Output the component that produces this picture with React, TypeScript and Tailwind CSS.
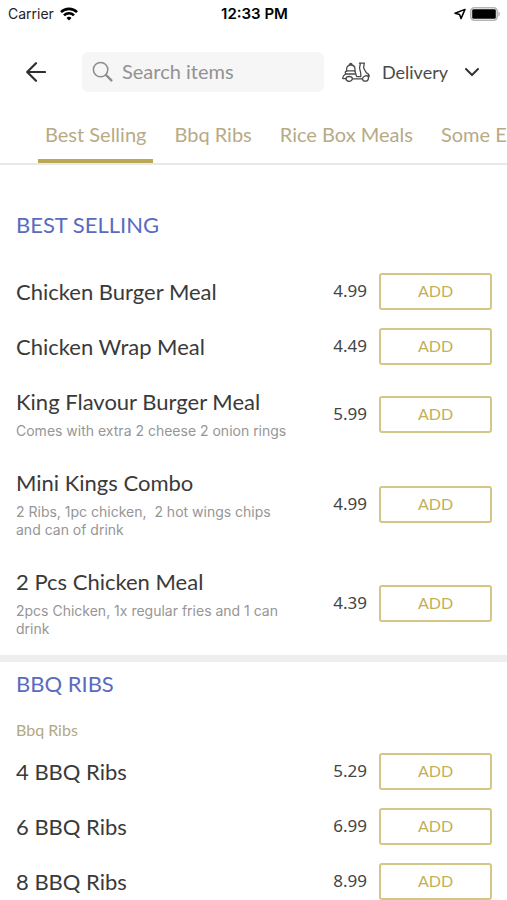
import { ChevronDown } from 'lucide-react'

interface MenuItem {
  name: string
  price: string
  description?: string
}

interface MenuSection {
  title: string
  subtitle?: string
  items: MenuItem[]
}

const tabs = ['Best Selling', 'Bbq Ribs', 'Rice Box Meals', 'Some E']

const sections: MenuSection[] = [
  {
    title: 'BEST SELLING',
    items: [
      { name: 'Chicken Burger Meal', price: '4.99' },
      { name: 'Chicken Wrap Meal', price: '4.49' },
      {
        name: 'King Flavour Burger Meal',
        price: '5.99',
        description: 'Comes with extra 2 cheese 2 onion rings',
      },
      {
        name: 'Mini Kings Combo',
        price: '4.99',
        description: '2 Ribs, 1pc chicken,  2 hot wings chips and can of drink',
      },
      {
        name: '2 Pcs Chicken Meal',
        price: '4.39',
        description: '2pcs Chicken, 1x regular fries and 1 can drink',
      },
    ],
  },
  {
    title: 'BBQ RIBS',
    subtitle: 'Bbq Ribs',
    items: [
      { name: '4 BBQ Ribs', price: '5.29' },
      { name: '6 BBQ Ribs', price: '6.99' },
      { name: '8 BBQ Ribs', price: '8.99' },
    ],
  },
]

const WifiIcon = () => (
  <svg viewBox="0 0 18 14" className="h-3.5 w-[18px]" fill="none" stroke="black" strokeWidth="2.6">
    <path d="M1 5.2C5.4.7 12.6.7 17 5.2" />
    <path d="M4 8.4C6.8 5.6 11.2 5.6 14 8.4" />
    <path d="M6.5 10.9C8 9.5 10 9.5 11.5 10.9L9 13.5Z" fill="black" stroke="none" />
  </svg>
)

const LocationIcon = () => (
  <svg viewBox="0 0 12 12" className="size-3" fill="none" stroke="black" strokeWidth="1.5" strokeLinejoin="round">
    <path d="M11 1.4L1 5.2L5.6 6.4L7 10.6Z" />
  </svg>
)

const BatteryIcon = () => (
  <svg viewBox="0 0 31 14" className="h-3.5 w-[31px]">
    <rect x="0.8" y="0.8" width="26.4" height="12.4" rx="3.4" fill="white" stroke="#b5b5b5" strokeWidth="1.6" />
    <rect x="2.2" y="2.2" width="23.6" height="9.6" rx="1.4" fill="black" />
    <path d="M28.4 4.5C30.5 5.3 30.5 8.7 28.4 9.5Z" fill="#b5b5b5" />
  </svg>
)

const BackIcon = () => (
  <svg viewBox="0 0 20 20" className="size-5" fill="none" stroke="#2f2f2f" strokeWidth="2.2" strokeLinecap="round" strokeLinejoin="round">
    <path d="M19 10H1.5M10 1.2L1.2 10L10 18.8" />
  </svg>
)

const SearchIcon = () => (
  <svg viewBox="0 0 22 22" className="size-[22px] shrink-0" fill="none" stroke="#8c8c8c" strokeLinecap="round">
    <circle cx="8.6" cy="8.6" r="7.2" strokeWidth="1.5" />
    <path d="M14 14L19.4 19.4" strokeWidth="2.4" />
  </svg>
)

const ScooterIcon = () => (
  <svg viewBox="0 0 28 20" className="h-5 w-7" fill="none" stroke="#4a4a4a" strokeWidth="1.3" strokeLinecap="round" strokeLinejoin="round">
    {/* delivery box */}
    <path d="M4.6 9.2V7.2C4.6 4.6 6.2 3 8.8 3S13 4.6 13 7.2V9.2M7.6 2.8C7.6 .9 10 .9 10 2.8M4.6 8.8H13" />
    {/* seat and rear body */}
    <path d="M4.6 9.2C2.8 9.4 2.8 11.8 4.4 12H13.2M4.2 12C2 12.8 .8 14.4 .8 16.6H4" />
    {/* floor */}
    <path d="M13 9.2L14.6 14.6H18.6M10.4 16.8H20.4" />
    {/* handlebar and front shield */}
    <path d="M17.4 1.2H22.4M18.4 1.4L17.6 5.4C17.4 7.4 18.8 9.4 18.8 12V14.6M22.2 1.4L21.6 6L24.4 10.8C26.4 11.4 27.2 12.8 27.2 14.6C24.6 13 21.4 13.6 20.4 16.8" />
    {/* wheels */}
    <path d="M4 16.6A3.2 2.8 0 0 0 10.400 16.6C10.200 13.800 4.200 13.800 4 16.600Z" />
    <path d="M20.4 16.8C21 20 26 20 26.4 16.6V14.4" />
  </svg>
)

const StatusBar = () => (
  <div className="grid h-7 grid-cols-3 items-center pr-1.5 pl-2 font-['Inter'] text-sm text-[#222]">
    <div className="flex items-center gap-1.5">
      <span>Carrier</span>
      <WifiIcon />
    </div>
    <span className="text-center text-[15px] font-semibold text-black">12:33 PM</span>
    <div className="flex items-center justify-end gap-1">
      <LocationIcon />
      <BatteryIcon />
    </div>
  </div>
)

const MenuRow = ({ item }: { item: MenuItem }) => (
  <li className="flex items-center">
    <div className="min-w-0 flex-1 pt-3.5 pr-10 pb-[13px]">
      <h3 className="text-[22px] leading-7 whitespace-nowrap text-[#3a3a3a]">{item.name}</h3>
      {item.description && (
        <p className="pt-1.5 pb-0.5 font-['Inter'] text-sm leading-[18px] whitespace-pre-wrap text-[#969696]">
          {item.description}
        </p>
      )}
    </div>
    <span className="mr-3 pb-0.5 font-['Noto_Sans'] text-[17px] text-[#444]">{item.price}</span>
    <button
      type="button"
      aria-label={`Add ${item.name}`}
      className="h-[37px] w-[113px] shrink-0 rounded-[3px] border-2 border-[#d3c686] pb-0.5 text-base text-[#c2af58]"
    >
      ADD
    </button>
  </li>
)

const App = () => {
  return (
    <div className="h-screen overflow-hidden bg-white font-['Lato',sans-serif]">
      <StatusBar />

      <header className="flex items-center pt-6 pr-[23px] pl-[26px]">
        <button type="button" aria-label="Back">
          <BackIcon />
        </button>
        <label className="ml-9 flex h-10 min-w-0 flex-1 items-center gap-2 rounded-md bg-[#f6f6f6] px-2.5">
          <SearchIcon />
          <input
            type="text"
            aria-label="Search items"
            placeholder="Search items"
            className="w-full min-w-0 bg-transparent pb-0.5 text-xl outline-none placeholder:text-[#929292]"
          />
        </label>
        <button type="button" className="ml-[18px] flex items-center text-lg text-[#4a4a4a]">
          <ScooterIcon />
          <span className="ml-3">Delivery</span>
          <ChevronDown className="ml-3 size-6 text-[#333]" strokeWidth={2} />
        </button>
      </header>

      <nav className="mt-4 flex overflow-hidden border-b-2 border-[#e8e8e8] pl-[38px] whitespace-nowrap">
        {tabs.map((tab, i) => (
          <button
            key={tab}
            type="button"
            className={`mr-3.5 h-[55px] shrink-0 border-b-4 px-[7px] text-xl text-[#b8aa85] ${
              i === 0 ? 'border-[#b9a957]' : 'border-transparent'
            }`}
          >
            {tab}
          </button>
        ))}
      </nav>

      <main>
        {sections.map((section, i) => (
          <section
            key={section.title}
            className={i === 0 ? 'pt-[46px] pr-[15px] pb-0.5 pl-4' : 'border-t-[7px] border-[#eee] pt-2 pr-[15px] pl-4'}
          >
            <h2 className="text-[22px] leading-7 text-[#5a6bbf]">{section.title}</h2>
            {section.subtitle ? (
              <p className="pt-5 pb-0.5 text-base leading-6 text-[#b3a884]">{section.subtitle}</p>
            ) : (
              <div className="h-[25px]" />
            )}
            <ul>
              {section.items.map((item) => (
                <MenuRow key={item.name} item={item} />
              ))}
            </ul>
          </section>
        ))}
      </main>
    </div>
  )
}

export default App
